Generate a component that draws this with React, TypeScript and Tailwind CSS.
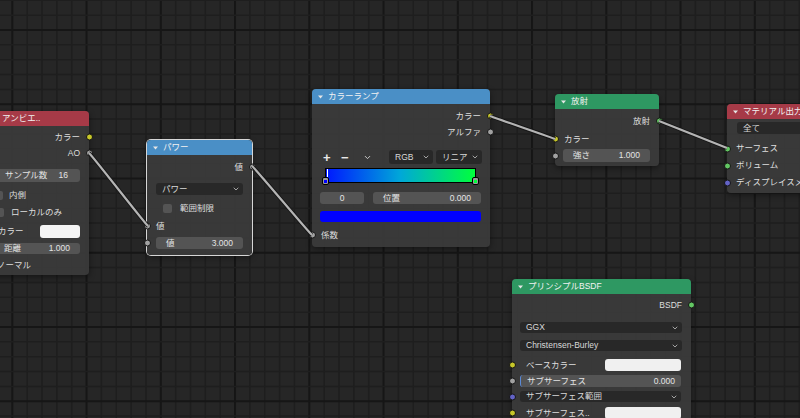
import { ChevronDown } from "lucide-react";
import type { ReactNode } from "react";

const SOCKET: Record<string, string> = {
  yellow: "bg-[#c7c729]",
  gray: "bg-[#a1a1a1]",
  green: "bg-[#63c763]",
  blue: "bg-[#6363c7]",
};

function Socket({ side, color }: { side: "l" | "r"; color: string }) {
  return (
    <span
      className={`absolute top-1/2 -translate-y-1/2 size-[7px] rounded-full border border-[#151515] ${SOCKET[color]} ${
        side === "l" ? "left-[-3.5px]" : "right-[-3.5px]"
      }`}
    />
  );
}

function Arrow() {
  return (
    <svg width="5" height="4" viewBox="0 0 5 4" className="shrink-0">
      <path d="M0 0.5 L5 0.5 L2.5 3.5 Z" fill="#e6e6e6" />
    </svg>
  );
}

function Header({ color, title }: { color: string; title: string }) {
  return (
    <div className={`h-[15px] rounded-t-[4px] ${color} flex items-center gap-[5px] px-[6px] text-[#f2f2f2] whitespace-nowrap overflow-hidden`}>
      <Arrow />
      <span>{title}</span>
    </div>
  );
}

function Row({ children, className = "" }: { children: ReactNode; className?: string }) {
  return <div className={`relative h-[16px] flex items-center px-[9px] ${className}`}>{children}</div>;
}

function Field({ label, value }: { label: string; value: string }) {
  return (
    <div className="h-full rounded-[3px] bg-[#545454] flex items-center justify-between px-[10px] text-[#e4e4e4]">
      <span>{label}</span>
      <span>{value}</span>
    </div>
  );
}

function Dropdown({ label, chevron = true }: { label: string; chevron?: boolean }) {
  return (
    <div className="h-full rounded-[3px] bg-[#282828] flex items-center justify-between pl-[6px] pr-[3px] text-[#d8d8d8] whitespace-nowrap overflow-hidden">
      <span>{label}</span>
      {chevron && <ChevronDown size={8} strokeWidth={2.5} className="text-[#bdbdbd] shrink-0" />}
    </div>
  );
}

function Check() {
  return <span className="size-[9px] rounded-[2px] bg-[#545454] shrink-0" />;
}

function Grid() {
  const xs = Array.from({ length: 58 }, (_, i) => ({ v: 12.3 + (i - 1) * 14.85, major: (i - 1) % 5 === 0 }));
  const ys = Array.from({ length: 32 }, (_, j) => ({ v: 30 + (j - 2) * 14.85, major: (j - 2) % 5 === 0 }));
  return (
    <svg className="absolute inset-0" width="800" height="418">
      {xs.map((x, i) => (
        <line key={`x${i}`} x1={x.v} y1={0} x2={x.v} y2={418} stroke={x.major ? "#161616" : "#1e1e1e"} strokeWidth={x.major ? 2 : 1.5} />
      ))}
      {ys.map((y, i) => (
        <line key={`y${i}`} x1={0} y1={y.v} x2={800} y2={y.v} stroke={y.major ? "#161616" : "#1e1e1e"} strokeWidth={y.major ? 2 : 1.5} />
      ))}
    </svg>
  );
}

// output socket -> input socket, in page pixels
const links = [
  [89, 153, 148, 226],
  [252, 166, 312, 235],
  [490, 116, 555, 139],
  [659, 121, 727, 148],
];

function Links() {
  return (
    <svg className="absolute inset-0 pointer-events-none" width="800" height="418">
      {links.map(([x1, y1, x2, y2], i) => {
        const d = `M${x1} ${y1} C${x1 + 2} ${y1 + 1}, ${x2 - 2} ${y2 - 1}, ${x2} ${y2}`;
        return (
          <g key={i}>
            <path d={d} stroke="#151515" strokeWidth={4} fill="none" />
            <path d={d} stroke="#b4b4b4" strokeWidth={2.2} fill="none" />
          </g>
        );
      })}
    </svg>
  );
}

const nodeBody = "absolute rounded-[4px] bg-[rgba(58,58,58,0.94)] shadow-[0_2px_6px_rgba(0,0,0,0.45)]";

export default function App() {
  return (
    <div className="relative w-[800px] h-[418px] overflow-hidden bg-[#262626] text-[8.5px] leading-none text-[#dedede] font-['Liberation_Sans','Noto_Sans_CJK_JP',sans-serif]">
      <Grid />

      {/* Ambient occlusion */}
      <div className={`${nodeBody} left-[-14px] top-[111px] w-[103px] h-[164px]`}>
        <Header color="bg-[#a63a47]" title="アンビエ.." />
        <div className="pt-[3px]">
          <Row className="justify-end">
            カラー
            <Socket side="r" color="yellow" />
          </Row>
          <Row className="justify-end">
            AO
            <Socket side="r" color="gray" />
          </Row>
          <div className="mt-[8px] h-[13px] pl-[8px] pr-[9px]">
            <div className="h-full rounded-[3px] bg-[#545454] flex items-center justify-between pl-[11px] pr-[12px] text-[#e4e4e4]">
              <span>サンプル数</span>
              <span>16</span>
            </div>
          </div>
          <Row className="mt-[5px] gap-[6px] pl-[8px]">
            <Check />
            内側
          </Row>
          <Row className="mt-[1px] gap-[7px] pl-[9px]">
            <Check />
            ローカルのみ
          </Row>
          <Row className="mt-[3px] justify-between pl-[12px]">
            <span>カラー</span>
            <span className="w-[40px] h-[13px] rounded-[3px] bg-[#f4f4f4]" />
          </Row>
          <div className="mt-[4px] h-[11px] pl-[8px] pr-[9px]">
            <Field label="距離" value="1.000" />
          </div>
          <Row className="mt-[3px] pl-[11px]">ノーマル</Row>
        </div>
      </div>

      {/* Power */}
      <div className={`${nodeBody} left-[147px] top-[140px] w-[105px] h-[115px] ring-1 ring-[#d6d6d6]`}>
        <Header color="bg-[#4a8fc6]" title="パワー" />
        <div className="pt-[4px]">
          <Row className="justify-end">
            値
            <Socket side="r" color="gray" />
          </Row>
          <div className="mt-[8px] h-[12px] px-[9px]">
            <Dropdown label="パワー" />
          </div>
          <Row className="mt-[5px] gap-[8px] pl-[16px]">
            <Check />
            範囲制限
          </Row>
          <Row className="mt-[2px]">
            値
            <Socket side="l" color="gray" />
          </Row>
          <div className="relative mt-[3px] h-[12px] px-[9px]">
            <Field label="値" value="3.000" />
            <Socket side="l" color="gray" />
          </div>
        </div>
      </div>

      {/* Color ramp */}
      <div className={`${nodeBody} left-[312px] top-[89px] w-[178px] h-[158px]`}>
        <Header color="bg-[#4a8fc6]" title="カラーランプ" />
        <div className="pt-[4px]">
          <Row className="justify-end">
            カラー
            <Socket side="r" color="yellow" />
          </Row>
          <Row className="justify-end">
            アルファ
            <Socket side="r" color="gray" />
          </Row>
          <div className="mt-[10px] h-[14px] flex items-center pl-[11px] pr-[8px]">
            <span className="w-[10px] text-[13px] font-bold text-[#e8e8e8]">+</span>
            <span className="ml-[8px] w-[10px] text-[13px] font-bold text-[#e8e8e8]">−</span>
            <ChevronDown size={9} strokeWidth={2.5} className="ml-[12px] text-[#d0d0d0]" />
            <div className="ml-auto flex gap-[3px] h-full">
              <div className="w-[44px] h-full">
                <Dropdown label="RGB" />
              </div>
              <div className="w-[46px] h-full">
                <Dropdown label="リニア" />
              </div>
            </div>
          </div>
          <div className="relative mt-[4px] ml-[13px] mr-[14px] h-[15px] border border-black bg-[linear-gradient(90deg,#0018ff,#00a8d8_50%,#00ff3c)]">
            <span className="absolute left-[-4px] bottom-[-3px] w-[7px] h-[8px] rounded-[2px] border border-black bg-[#9a9a9a] flex items-end justify-center pb-[1px]">
              <span className="w-[3px] h-[3px] bg-[#0000ff]" />
            </span>
            <span className="absolute left-[1px] top-[0px] w-[1px] h-[8px] bg-white" />
            <span className="absolute right-[-4px] bottom-[-3px] w-[7px] h-[8px] rounded-[2px] border border-black bg-[#9a9a9a] flex items-end justify-center pb-[1px]">
              <span className="w-[3px] h-[3px] bg-[#00ff3c]" />
            </span>
          </div>
          <div className="mt-[9px] h-[12px] flex gap-[9px] pl-[8px] pr-[9px]">
            <div className="w-[44px] h-full rounded-[3px] bg-[#545454] flex items-center justify-center text-[#e4e4e4]">0</div>
            <div className="flex-1 h-full">
              <Field label="位置" value="0.000" />
            </div>
          </div>
          <div className="mt-[7px] h-[11px] mx-[8px] mr-[9px] rounded-[3px] bg-[#0000ff]" />
          <Row className="mt-[5px]">
            係数
            <Socket side="l" color="gray" />
          </Row>
        </div>
      </div>

      {/* Emission */}
      <div className={`${nodeBody} left-[555px] top-[94px] w-[104px] h-[72px]`}>
        <Header color="bg-[#2e9862]" title="放射" />
        <div className="pt-[4px]">
          <Row className="justify-end">
            放射
            <Socket side="r" color="green" />
          </Row>
          <Row className="mt-[2px]">
            カラー
            <Socket side="l" color="yellow" />
          </Row>
          <div className="relative mt-[2px] h-[13px] pl-[8px] pr-[9px]">
            <Field label="強さ" value="1.000" />
            <Socket side="l" color="gray" />
          </div>
        </div>
      </div>

      {/* Material output */}
      <div className={`${nodeBody} left-[727px] top-[104px] w-[120px] h-[89px]`}>
        <Header color="bg-[#a63a47]" title="マテリアル出力" />
        <div className="pt-[3px]">
          <div className="h-[12px] pl-[10px] pr-[9px]">
            <Dropdown label="全て" chevron={false} />
          </div>
          <Row className="mt-[6px] h-[17px]">
            サーフェス
            <Socket side="l" color="green" />
          </Row>
          <Row className="h-[17px]">
            ボリューム
            <Socket side="l" color="green" />
          </Row>
          <Row className="h-[17px] whitespace-nowrap">
            ディスプレイスメント
            <Socket side="l" color="blue" />
          </Row>
        </div>
      </div>

      {/* Principled BSDF */}
      <div className={`${nodeBody} left-[512px] top-[279px] w-[179px] h-[160px]`}>
        <Header color="bg-[#2e9862]" title="プリンシプルBSDF" />
        <div className="pt-[3px]">
          <Row className="justify-end">
            BSDF
            <Socket side="r" color="green" />
          </Row>
          <div className="mt-[9px] h-[11px] pl-[8px] pr-[9px]">
            <Dropdown label="GGX" />
          </div>
          <div className="mt-[7px] h-[11px] pl-[8px] pr-[9px]">
            <Dropdown label="Christensen-Burley" />
          </div>
          <Row className="mt-[6px] justify-between pl-[14px] pr-[10px]">
            <span>ベースカラー</span>
            <span className="w-[76px] h-[12px] rounded-[3px] bg-[#f0f0f0]" />
            <Socket side="l" color="yellow" />
          </Row>
          <div className="relative mt-[2px] h-[12px] pl-[8px] pr-[10px]">
            <div className="h-full rounded-[3px] bg-[#545454] flex items-center justify-between pl-[6px] pr-[6px] text-[#e4e4e4] border-l border-[#5a8ad8]">
              <span>サブサーフェス</span>
              <span>0.000</span>
            </div>
            <Socket side="l" color="gray" />
          </div>
          <div className="relative mt-[4px] h-[11px] pl-[8px] pr-[10px]">
            <Dropdown label="サブサーフェス範囲" />
            <Socket side="l" color="blue" />
          </div>
          <Row className="mt-[3px] justify-between pl-[14px] pr-[10px]">
            <span>サブサーフェス..</span>
            <span className="w-[76px] h-[12px] rounded-[3px] bg-[#f0f0f0]" />
            <Socket side="l" color="yellow" />
          </Row>
        </div>
      </div>

      <Links />
    </div>
  );
}
